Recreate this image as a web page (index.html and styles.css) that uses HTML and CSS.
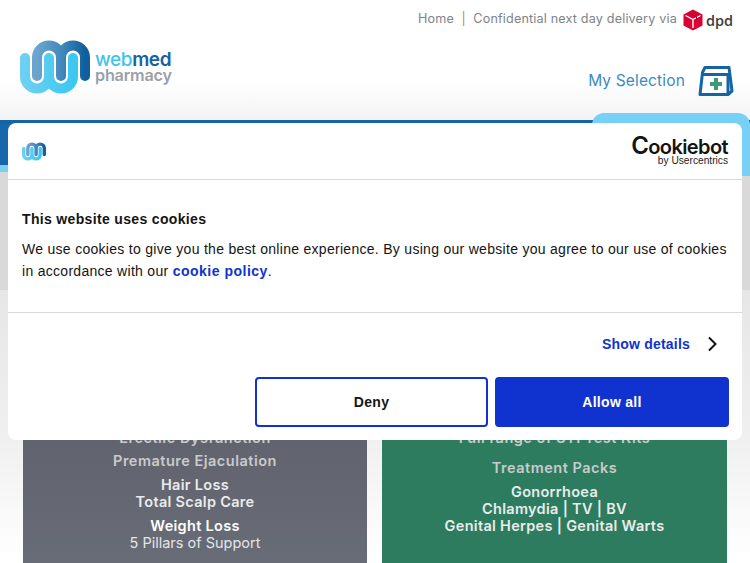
FILE: index.html
```html
<!DOCTYPE html>
<html lang="en">
<head>
<meta charset="utf-8">
<title>Webmed Pharmacy</title>
<link rel="stylesheet" href="styles.css">
</head>
<body>
<svg class="defs" width="0" height="0" aria-hidden="true">
  <defs>
    <linearGradient id="mGrad" gradientUnits="userSpaceOnUse" x1="37" y1="0" x2="85" y2="0">
      <stop offset="0" stop-color="#6ba5cf"/>
      <stop offset="0.55" stop-color="#3f85ba"/>
      <stop offset="1" stop-color="#0f5f9e"/>
    </linearGradient>
    <linearGradient id="wGrad" gradientUnits="userSpaceOnUse" x1="25" y1="0" x2="73" y2="0">
      <stop offset="0" stop-color="#6cd0f2"/>
      <stop offset="1" stop-color="#3cc8f0"/>
    </linearGradient>
    <symbol id="mark" viewBox="20 39 70 54">
      <path d="M25 57V75.500A12 12 0 0 0 49 75.500A12 12 0 0 0 73 75.500V57M49 75.500V57" fill="none" stroke="url(#wGrad)" stroke-width="10" stroke-linecap="round"/>
      <path d="M37 75V56.500A12 12 0 0 1 61 56.500A12 12 0 0 1 85 56.500V75M61 56.500V75" fill="none" stroke="url(#mGrad)" stroke-width="10" stroke-linecap="round"/>
    </symbol>
  </defs>
</svg>

<div class="page">
  <header class="site-header">
    <div class="topline">
      <a class="toplink">Home</a><span class="sep">|</span><span>Confidential next day delivery via</span>
      <svg class="dpd-cube" viewBox="0 0 20 22" width="20" height="22" aria-hidden="true">
        <path d="M10 0.500L19.500 5.500V16.500L10 21.500L0.500 16.500V5.500Z" fill="#dc0032"/>
        <path d="M2.500 6.500L10 10.500L17.500 6.500M10 10.500V19" fill="none" stroke="#fff" stroke-width="1.400"/>
        <path d="M6 3.800L13.500 7.800V10" fill="none" stroke="#a00024" stroke-width="1"/>
      </svg>
      <span class="dpd-word">dpd</span>
    </div>
    <div class="brandline">
      <div class="brand">
        <svg class="logo-mark" width="70" height="54"><use href="#mark"/></svg>
        <div class="logo-words">
          <div class="logo-web">web<span class="logo-med">med</span></div>
          <div class="logo-pharm">pharmacy</div>
        </div>
      </div>
      <div class="selection">
        <span class="selection-label">My Selection</span>
        <svg class="bag" viewBox="0 0 36 30" width="36" height="30" aria-hidden="true">
          <path d="M2 28.500L4.500 6.500L7 1.500H31L34 25L30 28.500Z" fill="#fff" stroke="#1565a5" stroke-width="3" stroke-linejoin="round"/>
          <path d="M4.500 8.500H30V28.500" fill="none" stroke="#1565a5" stroke-width="3"/>
          <path d="M12 18H24M18 12V24" stroke="#3f9a78" stroke-width="4" fill="none"/>
        </svg>
      </div>
    </div>
  </header>

  <nav class="nav-band">
    <div class="nav-strip"></div>
    <div class="nav-tab"></div>
  </nav>
  <div class="hero"></div>

  <main class="cards">
    <section class="card card-grey">
      <p class="faded line-first">Erectile Dysfunction</p>
      <p class="faded line-second">Premature Ejaculation</p>
      <p class="soft">Hair Loss<br>Total Scalp Care</p>
      <p class="bright">Weight Loss<br><span class="thin">5 Pillars of Support</span></p>
    </section>
    <section class="card card-green">
      <p class="faded line-first">Full range of STI Test Kits</p>
      <p class="faded packs">Treatment Packs</p>
      <p class="soft">Gonorrhoea<br>Chlamydia | TV | BV<br>Genital Herpes | Genital Warts</p>
    </section>
  </main>

  <div class="cookie" role="dialog" aria-label="Cookie consent">
    <div class="cookie-head">
      <svg class="cookie-mark" width="24" height="19"><use href="#mark"/></svg>
      <div class="cookiebot">
        <div class="cb-name"><span class="cb-c">C</span>ookiebot</div>
        <div class="cb-by">by Usercentrics</div>
      </div>
    </div>
    <div class="cookie-body">
      <h2 class="cookie-title">This website uses cookies</h2>
      <p class="cookie-text">We use cookies to give you the best online experience. By using our website you agree to our use of cookies in accordance with our <a class="cookie-link">cookie policy</a>.</p>
    </div>
    <div class="cookie-foot">
      <div class="details">
        <span class="details-label">Show details</span>
        <svg class="chev" viewBox="0 0 10 16" width="10" height="16" aria-hidden="true"><path d="M2 1.500L8.500 8L2 14.500" fill="none" stroke="#141414" stroke-width="2"/></svg>
      </div>
      <div class="buttons">
        <button class="btn btn-deny">Deny</button>
        <button class="btn btn-allow">Allow all</button>
      </div>
    </div>
  </div>
</div>
</body>
</html>
```

FILE: styles.css
```css
* { box-sizing: border-box; }
html, body { margin: 0; padding: 0; background: #fff; }
.defs { position: absolute; }
.page {
  position: relative;
  width: 750px;
  height: 563px;
  overflow: hidden;
  font-family: "Inter", "Open Sans", sans-serif;
}

/* header */
.site-header {
  height: 120px;
  padding: 8px 17px 0 20px;
  background: linear-gradient(to bottom, #fff 0, #fff 80px, #f3f3f3 120px);
}
.topline {
  display: flex;
  justify-content: flex-end;
  align-items: center;
  height: 20px;
  margin-bottom: 4px;
  font-size: 12.600px;
  letter-spacing: 0.17px;
  color: #7d8489;
}
.sep { margin: 0 7.500px; color: #a58b63; }
.dpd-cube { margin: 4px 3px 0 6px; }
.dpd-word {
  margin-top: 5px;
  font-family: "Open Sans", sans-serif;
  font-weight: 600;
  font-size: 14.500px;
  letter-spacing: 0;
  color: #3c3c3c;
}
.brandline {
  display: flex;
  justify-content: space-between;
  align-items: flex-start;
  padding-top: 8px;
}
.brand { display: flex; align-items: flex-start; gap: 5px; }
.logo-mark { display: block; }
.logo-words { padding-top: 12px; font-family: "Inter", sans-serif; font-weight: 600; }
.logo-web { font-size: 19px; line-height: 15px; letter-spacing: -0.4px; color: #3fc4ee; font-weight: 500; }
.logo-med { color: #17639f; font-weight: 600; }
.logo-pharm { font-size: 16.200px; line-height: 16px; letter-spacing: -0.2px; color: #9a9fa8; }
.selection { display: flex; align-items: center; gap: 13px; padding-top: 26px; margin-right: -1px; }
.selection-label { margin-bottom: 2px; font-size: 15.500px; letter-spacing: 0.15px; color: #3b8bc2; }
.bag { display: block; }

/* nav */
.nav-band {
  position: relative;
  height: 52px;
  border-top: 4px solid #1565a5;
  background: #1668a8;
}
.nav-strip {
  position: absolute;
  left: 0;
  right: 0;
  bottom: 0;
  height: 7px;
  background: #7ccdf0;
}
.nav-tab {
  position: absolute;
  top: -11px;
  right: 0;
  width: 158px;
  height: 63px;
  border-radius: 12px 12px 0 0;
  background: #77d0f6;
}
.hero { height: 118px; background: #d9d9d9; }

/* cards */
.cards {
  display: grid;
  grid-template-columns: 344px 345px;
  column-gap: 15px;
  padding: 0 23px;
  height: 273px;
  background: linear-gradient(to bottom, #e6e6e6 0, #f0f0f0 150px, #fff 270px);
}
.card {
  margin-top: 100px;
  padding-top: 39px;
  text-align: center;
  color: #fff;
  font-size: 14.500px;
  font-weight: 600;
  line-height: 17px;
}
.card p { margin: 0 0 7px; }
.card-grey { background: linear-gradient(to bottom, #5e606b 0, #686c77 100%); }
.card-green { background: #2e7c5f; }
.faded { color: #c9cbcc; letter-spacing: 0.5px; }
.card .line-first { margin-bottom: 6px; }
.card .packs { margin: 13px 0 7px; }
.soft { color: #e9ecec; letter-spacing: 0.3px; }
.bright { color: #fff; letter-spacing: 0.3px; }
.thin { font-weight: 400; color: #e4e5e8; letter-spacing: 0; }

/* cookie dialog */
.cookie {
  position: absolute;
  left: 8px;
  top: 123px;
  width: 734px;
  height: 317px;
  border-radius: 8px;
  background: #fff;
  color: #141414;
  font-family: "Liberation Sans", Arial, sans-serif;
  font-size: 14px;
  letter-spacing: 0.29px;
  display: flex;
  flex-direction: column;
}
.cookie-head {
  display: flex;
  justify-content: space-between;
  align-items: flex-start;
  height: 57px;
  padding: 13px 14px 0 14px;
  border-bottom: 1px solid #d8d8d8;
}
.cookie-mark { margin-top: 6px; display: block; }
.cookiebot { text-align: right; color: #141414; letter-spacing: 0; }
.cb-name { font-family: "Inter", sans-serif; font-weight: 600; font-size: 20px; line-height: 20px; letter-spacing: -0.6px; }
.cb-c { font-size: 24px; }
.cb-by { font-size: 10.200px; line-height: 8px; letter-spacing: 0; color: #222; }
.cookie-body {
  height: 133px;
  padding: 30px 14px 0;
  border-bottom: 1px solid #d8d8d8;
}
.cookie-title { margin: 0 0 10px; font-size: 14px; line-height: 18px; font-weight: 700; letter-spacing: 0.34px; }
.cookie-text { margin: 0; line-height: 22.400px; }
.cookie-link { color: #1032cf; font-weight: 700; letter-spacing: 0.5px; }
.cookie-foot { padding: 21px 13px 0 14px; flex: 1; }
.details { display: flex; justify-content: flex-end; align-items: center; gap: 17px; padding-right: 12px; height: 20px; }
.details-label { color: #1032cf; font-weight: 700; letter-spacing: 0.2px; }
.chev { display: block; }
.buttons { display: flex; justify-content: flex-end; gap: 7px; margin-top: 23px; }
.btn {
  height: 50px;
  border-radius: 4px;
  border: 2px solid #1032cf;
  font: 700 14px "Liberation Sans", Arial, sans-serif;
  letter-spacing: 0.3px;
}
.btn-deny { width: 233px; background: #fff; color: #141414; }
.btn-allow { width: 234px; background: #1032cf; color: #fff; }
```
